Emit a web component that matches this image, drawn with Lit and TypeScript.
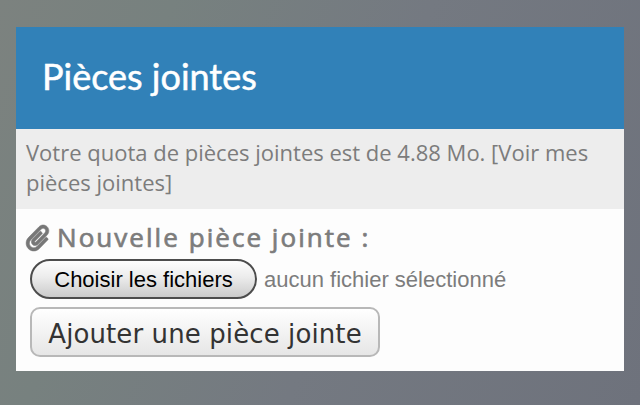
import { LitElement, html, css } from "lit";
import { customElement } from "lit/decorators.js";

@customElement("app-root")
export class AppRoot extends LitElement {
  static styles = css`
    :host {
      display: block;
      box-sizing: border-box;
      width: 640px;
      height: 405px;
      padding: 27px 16px 34px;
      overflow: hidden;
      background: linear-gradient(110deg, #7c827f 0%, #77817f 22%, #747981 55%, #6e727c 100%);
    }
    .card { height: 344px; background: #fdfdfd; color: #7c7c7c; display: flex; flex-direction: column; }
    header { box-sizing: border-box; height: 102px; padding: 0 26px 4px; background: #3181b8; display: flex; align-items: center; }
    h1 {
      margin: 0;
      font: 400 36px/44px Lato, sans-serif;
      color: #fff;
      -webkit-text-stroke: 0.5px #fff;
      white-space: nowrap;
    }
    .quota { box-sizing: border-box; height: 80px; padding: 8px 10px 12px; background: #ededed; font: 22px/30px "Open Sans", sans-serif; }
    .line { display: block; white-space: nowrap; }
    .form { padding: 10px; display: flex; flex-direction: column; align-items: flex-start; }
    .label { display: flex; align-items: center; height: 38px; font: 400 26px/36px "Open Sans", sans-serif; letter-spacing: 2.05px; white-space: nowrap; }
    .label span { padding-bottom: 2px; -webkit-text-stroke: 0.7px #7c7c7c; }
    .clip { width: 23px; height: 26px; margin: 0 8px 0 0; flex: none; overflow: visible; }
    .file { display: flex; align-items: center; height: 40px; margin: 2px 0 0 4px; gap: 7px; font: 22px/26px "Liberation Sans", sans-serif; white-space: nowrap; }
    .file span { padding-top: 2px; }
    button { box-sizing: border-box; white-space: nowrap; text-align: center; }
    .choose { width: 227px; height: 40px; padding: 2px 0 0; border: 2px solid #4c4c4c; border-radius: 20px; background: linear-gradient(#fdfdfd, #ececec 45%, #cbcbcb); color: #000; font: inherit; }
    .add { width: 350px; height: 50px; padding: 3px 0 0; margin: 8px 0 0 4px; border: 2px solid #b8b8b8; border-radius: 10px; background: linear-gradient(#fff, #e6e6e6); color: #333; font: 26px/30px "DejaVu Sans", sans-serif; letter-spacing: 0.1px; }
  `;

  render() {
    return html`
      <section class="card">
        <header><h1>Pièces jointes</h1></header>
        <div class="quota">
          <span class="line">Votre quota de pièces jointes est de 4.88 Mo. [Voir mes</span>
          <span class="line">pièces jointes]</span>
        </div>
        <div class="form">
          <div class="label">
            <svg class="clip" viewBox="0 0 448 512" fill="#777" stroke="#777" stroke-width="10">
              <path d="M43.246 466.142c-58.43-60.289-57.341-157.511 1.386-217.581L254.392 34c44.316-45.332 116.351-45.336 160.671 0 43.89 44.894 43.943 117.329 0 162.276L232.214 383.128c-29.855 30.537-78.633 30.111-107.982-.998-28.275-29.97-27.368-77.473 1.452-106.953l143.743-146.835c6.182-6.314 16.312-6.422 22.626-.241l22.861 22.379c6.315 6.182 6.422 16.312.241 22.626L171.427 319.927c-4.932 5.045-5.236 13.428-.648 18.292 4.372 4.634 11.245 4.711 15.688.165l182.849-186.851c19.613-20.062 19.613-52.725-.011-72.798-19.189-19.627-49.957-19.637-69.154 0L90.39 293.295c-34.763 35.56-35.299 93.12-1.191 128.313 34.01 35.093 88.985 35.137 123.058.286l172.06-175.999c6.177-6.319 16.307-6.433 22.626-.256l22.877 22.364c6.319 6.177 6.434 16.307.256 22.626l-172.06 175.998c-59.576 60.938-155.943 60.216-214.77-.485z" />
            </svg>
            <span>Nouvelle pièce jointe :</span>
          </div>
          <div class="file">
            <button class="choose">Choisir les fichiers</button>
            <span>aucun fichier sélectionné</span>
          </div>
          <button class="add">Ajouter une pièce jointe</button>
        </div>
      </section>
    `;
  }
}
